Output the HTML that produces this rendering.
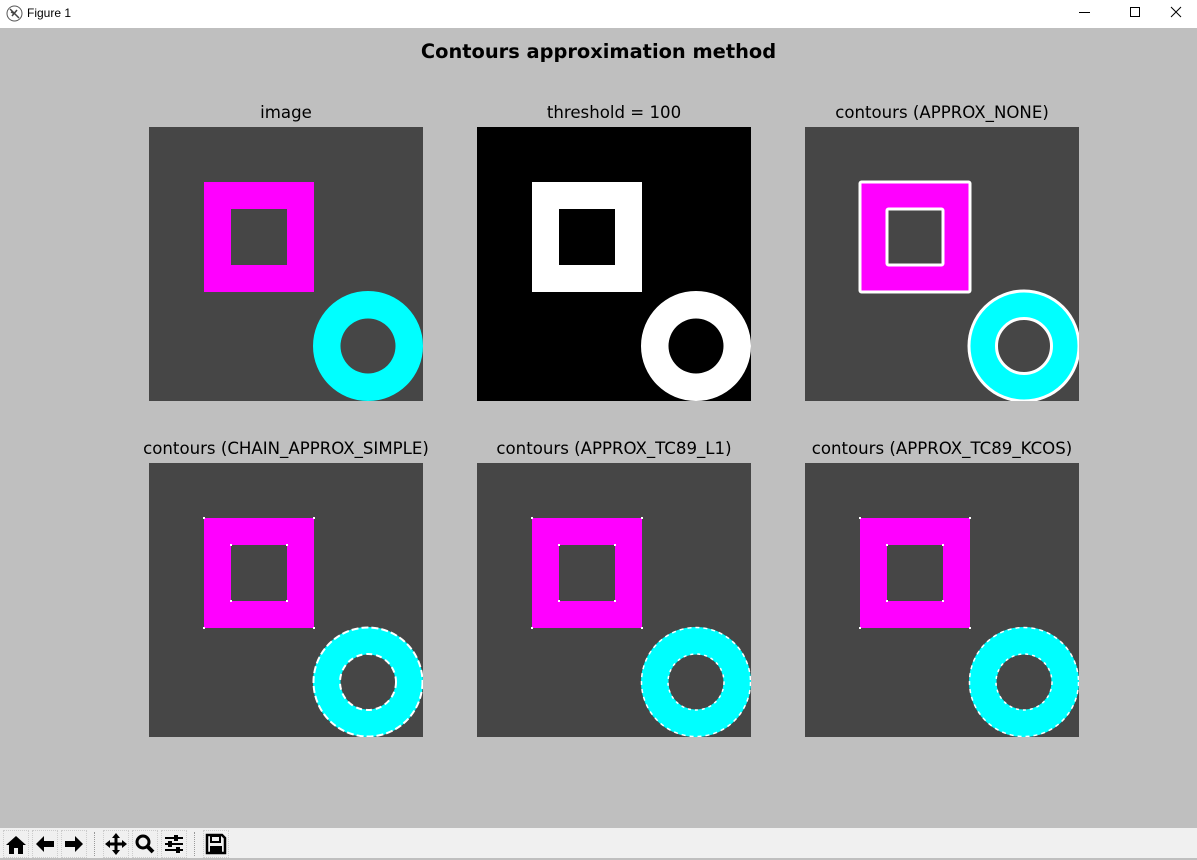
<!DOCTYPE html>
<html><head><meta charset="utf-8">
<style>
html,body{margin:0;padding:0}
body{width:1197px;height:858px;position:relative;background:#bfbfbf;overflow:hidden;font-family:"DejaVu Sans","Liberation Sans",sans-serif}
#tb{position:absolute;left:0;top:0;width:1197px;height:28px;background:#fff}
#tb .t{position:absolute;left:27px;top:6px;font-family:"Liberation Sans",sans-serif;font-size:12px;color:#000}
#title{position:absolute;left:0;width:1197px;top:40px;text-align:center;font-weight:bold;font-size:19.4px;color:#000}
.lbl{position:absolute;width:400px;text-align:center;font-size:16.6px;color:#000}
.p{position:absolute;width:274px;height:274px}
#bar{position:absolute;left:0;top:828px;width:1197px;height:30px;background:#f0f0f0}
.btn{position:absolute;top:2px;width:26px;height:28px;border:1px dotted #ccc;box-sizing:border-box;background:#f0f0f0}
</style></head><body>
<div id="tb">
<svg style="position:absolute;left:6px;top:5px" width="17" height="17" viewBox="0 0 17 17"><circle cx="8.5" cy="8.5" r="7.5" fill="#fff" stroke="#555" stroke-width="1"/><path d="M4 4L13 13M6 11L11 5M5 7L9 9" stroke="#444" stroke-width="1.5"/></svg>
<div class="t">Figure 1</div>
<svg style="position:absolute;left:1060px;top:0" width="137" height="28"><path d="M19 12.5H30" stroke="#000" stroke-width="1"/><rect x="70.5" y="7.5" width="9" height="9" fill="none" stroke="#000"/><path d="M111 7L121 17M121 7L111 17" stroke="#000" stroke-width="1"/></svg>
</div>
<div id="title">Contours approximation method</div>

<div class="lbl" style="left:86px;top:103px">image</div>
<div class="lbl" style="left:414px;top:103px">threshold = 100</div>
<div class="lbl" style="left:742px;top:103px">contours (APPROX_NONE)</div>
<div class="lbl" style="left:86px;top:439px">contours (CHAIN_APPROX_SIMPLE)</div>
<div class="lbl" style="left:414px;top:439px">contours (APPROX_TC89_L1)</div>
<div class="lbl" style="left:742px;top:439px">contours (APPROX_TC89_KCOS)</div>

<svg width="0" height="0" style="position:absolute">
<defs>
<clipPath id="cl"><rect width="274" height="274"/></clipPath>
<g id="base">
<rect width="274" height="274" fill="#464646"/>
<path d="M55 55H165V165H55ZM82 82V138H138V82Z" fill="#ff00ff" fill-rule="evenodd"/>
<path d="M164 219a55 55 0 1 0 110 0a55 55 0 1 0 -110 0ZM191.5 219a27.5 27.5 0 1 1 55 0a27.5 27.5 0 1 1 -55 0Z" fill="#00ffff" fill-rule="evenodd"/>
</g>
<g id="dots" fill="#fff">
<rect x="54" y="54" width="2" height="2"/><rect x="164" y="54" width="2" height="2"/><rect x="54" y="164" width="2" height="2"/><rect x="164" y="164" width="2" height="2"/>
<rect x="81" y="81" width="2" height="2"/><rect x="137" y="81" width="2" height="2"/><rect x="81" y="137" width="2" height="2"/><rect x="137" y="137" width="2" height="2"/>
</g>
</defs>
</svg>

<svg class="p" style="left:149px;top:127px" viewBox="0 0 274 274"><g clip-path="url(#cl)"><use href="#base"/></g></svg>
<svg class="p" style="left:477px;top:127px" viewBox="0 0 274 274"><g clip-path="url(#cl)">
<rect width="274" height="274" fill="#000"/>
<path d="M55 55H165V165H55ZM82 82V138H138V82Z" fill="#fff" fill-rule="evenodd"/>
<path d="M164 219a55 55 0 1 0 110 0a55 55 0 1 0 -110 0ZM191.5 219a27.5 27.5 0 1 1 55 0a27.5 27.5 0 1 1 -55 0Z" fill="#fff" fill-rule="evenodd"/>
</g></svg>
<svg class="p" style="left:805px;top:127px" viewBox="0 0 274 274"><g clip-path="url(#cl)"><use href="#base"/>
<rect x="55" y="55" width="110" height="110" rx="1.5" fill="none" stroke="#fff" stroke-width="3"/>
<rect x="82" y="82" width="56" height="56" rx="1.5" fill="none" stroke="#fff" stroke-width="3"/>
<circle cx="219" cy="219" r="55" fill="none" stroke="#fff" stroke-width="3"/>
<circle cx="219" cy="219" r="27.5" fill="none" stroke="#fff" stroke-width="3"/>
</g></svg>

<svg class="p" style="left:149px;top:463px" viewBox="0 0 274 274"><g clip-path="url(#cl)"><use href="#base"/><use href="#dots"/>
<circle cx="219" cy="219" r="54.5" fill="none" stroke="#fff" stroke-width="2" stroke-dasharray="7 3"/>
<circle cx="219" cy="219" r="28" fill="none" stroke="#fff" stroke-width="2" stroke-dasharray="6 4"/>
</g></svg>
<svg class="p" style="left:477px;top:463px" viewBox="0 0 274 274"><g clip-path="url(#cl)"><use href="#base"/><use href="#dots"/>
<circle cx="219" cy="219" r="54.5" fill="none" stroke="#fff" stroke-width="1.5" stroke-dasharray="4 4"/>
<circle cx="219" cy="219" r="28" fill="none" stroke="#fff" stroke-width="1.5" stroke-dasharray="3 4"/>
</g></svg>
<svg class="p" style="left:805px;top:463px" viewBox="0 0 274 274"><g clip-path="url(#cl)"><use href="#base"/><use href="#dots"/>
<circle cx="219" cy="219" r="54.5" fill="none" stroke="#fff" stroke-width="1.5" stroke-dasharray="4 4"/>
<circle cx="219" cy="219" r="28" fill="none" stroke="#fff" stroke-width="1.5" stroke-dasharray="3 4"/>
</g></svg>

<div id="bar">
<div class="btn" style="left:3px"><svg width="24" height="24" viewBox="0 0 24 24" style="margin:1px 0 0 0"><path d="M2 13L12 4L22 13H19V22H14V16H10V22H5V13Z" fill="#000"/></svg></div>
<div class="btn" style="left:32px"><svg width="24" height="24" viewBox="0 0 24 24"><path d="M3 13L11 5V10H21V16H11V21Z" fill="#000"/></svg></div>
<div class="btn" style="left:61px"><svg width="24" height="24" viewBox="0 0 24 24"><path d="M21 13L13 5V10H3V16H13V21Z" fill="#000"/></svg></div>
<div style="position:absolute;left:94px;top:4px;width:1px;height:24px;border-left:1px dotted #999"></div>
<div class="btn" style="left:103px"><svg width="24" height="24" viewBox="0 0 24 24"><path d="M12 2L16 7H13.5V11.5H18V9L23 13L18 17V14.5H13.5V19H16L12 24L8 19H10.5V14.5H6V17L1 13L6 9V11.5H10.5V7H8Z" fill="#000"/></svg></div>
<div class="btn" style="left:132px"><svg width="24" height="24" viewBox="0 0 24 24"><circle cx="10" cy="11" r="6" fill="none" stroke="#000" stroke-width="3"/><path d="M14 15L20 21" stroke="#000" stroke-width="4"/></svg></div>
<div class="btn" style="left:161px"><svg width="24" height="24" viewBox="0 0 24 24"><path d="M3 7H21M3 13H21M3 19H21" stroke="#000" stroke-width="2"/><rect x="12" y="4" width="4" height="6" fill="#000"/><rect x="6" y="10" width="4" height="6" fill="#000"/><rect x="14" y="16" width="4" height="6" fill="#000"/></svg></div>
<div style="position:absolute;left:194px;top:4px;width:1px;height:24px;border-left:1px dotted #999"></div>
<div class="btn" style="left:203px"><svg width="24" height="24" viewBox="0 0 24 24"><path d="M3 4H18L21 7V22H3Z" fill="none" stroke="#000" stroke-width="2.5"/><rect x="7" y="5" width="9" height="6" fill="none" stroke="#000" stroke-width="2"/><rect x="6" y="15" width="12" height="6" fill="#000"/></svg></div>
</div>
</body></html>
